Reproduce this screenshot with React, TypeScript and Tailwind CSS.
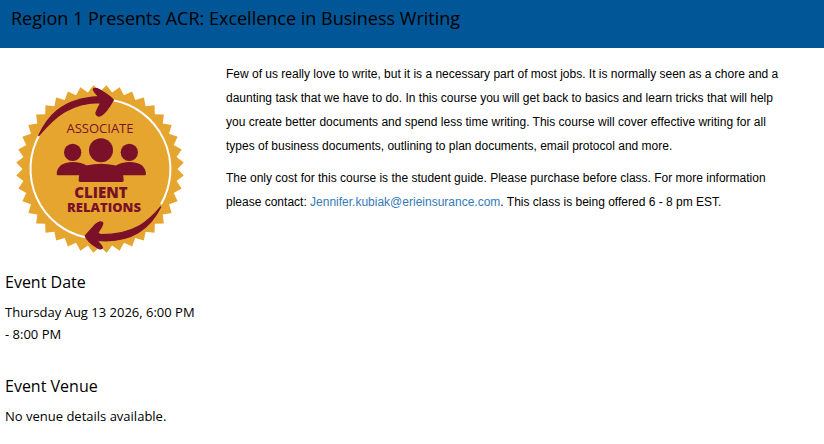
import React from 'react';

const TEETH = 40;

// Zigzag outline of the seal, tips and valleys alternating round the centre
const sealPoints = Array.from({ length: TEETH * 2 }, (_, i) => {
  const angle = ((i * 4.5 + 4.5) * Math.PI) / 180;
  const radius = i % 2 === 0 ? 84 : 77.5;
  return `${(84 + radius * Math.sin(angle)).toFixed(2)},${(84 - radius * Math.cos(angle)).toFixed(2)}`;
}).join(' ');

const AssociateBadge: React.FC = () => (
  <svg viewBox="0 0 168 168" className="w-[168px] h-[168px]" role="img" aria-label="Associate Client Relations">
    <polygon points={sealPoints} fill="#e5a52f" />
    {/* ring, open where the arrows run */}
    <path d="M97 15.3A70 70 0 0 1 145 119.2M69 152.3A70 70 0 0 1 23 50.6" fill="none" stroke="#fff" strokeWidth="2" />

    <g fill="#7b1128" stroke="#7b1128" strokeLinejoin="round">
      {/* arrows */}
      <g strokeWidth="4">
        <path transform="translate(14 -5) scale(.3333)" d="M26 167C50 116 90 56 206 50C203 46 190 34 190 28C194 21 207 28 216 34C230 43 242 50 250 60C240 78 226 100 212 107C204 110 198 105 198 99C201 88 208 79 212 68C120 68 75 110 26 167Z" />
        <path transform="translate(59 115) scale(.3333)" d="M257 21C225 60 180 104 78 104L68 100C72 90 85 76 83 69C78 62 66 69 59 76L31 107C35 118 50 133 66 142C74 147 82 149 82 142C80 134 69 128 66 121C160 130 222 92 257 21Z" />
      </g>
      {/* people */}
      <g transform="translate(34 30) scale(.3333)" stroke="none">
        <circle cx="68" cy="112" r="26" />
        <circle cx="238" cy="112" r="26" />
        <circle cx="153" cy="106" r="36" />
        <path d="M24 181Q20 181 20 176C22 156 34 147 48 144Q68 138 92 144Q104 147 112 153L112 181Z" />
        <path d="M284 181Q288 181 288 176C286 156 274 147 260 144Q240 138 216 144Q204 147 196 153L196 181Z" />
        <path d="M90 201Q86 201 86 196C87 170 94 156 112 151Q153 142 194 151C213 156 220 170 221 196Q221 201 217 201Z" />
      </g>
    </g>

    <g fill="#7b1128" stroke="none" textAnchor="middle">
      <text x="84" y="48" className="font-['Open_Sans',sans-serif] text-[13px]">ASSOCIATE</text>
      <text x="85" y="113" className="font-['Open_Sans',sans-serif] text-[15px] font-extrabold">CLIENT</text>
      <text x="88" y="127" className="font-['Open_Sans',sans-serif] text-[13px] font-extrabold">RELATIONS</text>
    </g>
  </svg>
);

interface EventSectionProps {
  title: string;
  children: React.ReactNode;
}

const EventSection: React.FC<EventSectionProps> = ({ title, children }) => (
  <section>
    <h2 className="text-base leading-6">{title}</h2>
    <p className="mt-[7px] text-[13px] leading-[22px]">{children}</p>
  </section>
);

export default function App() {
  return (
    <div className="bg-white font-['Open_Sans',sans-serif] text-black">
      <header className="bg-[#005696] px-[11px] pt-1 pb-4">
        <h1 className="text-lg leading-7">Region 1 Presents ACR: Excellence in Business Writing</h1>
      </header>

      <main className="flex">
        <aside className="w-[206px] shrink-0 pr-2 pl-[5px]">
          <div className="pl-[11px] pt-[37px]">
            <AssociateBadge />
          </div>
          <div className="mt-[17px] flex flex-col gap-[29px]">
            <EventSection title="Event Date">Thursday Aug 13 2026, 6:00 PM - 8:00 PM</EventSection>
            <EventSection title="Event Venue">No venue details available.</EventSection>
          </div>
        </aside>

        <div className="flex-1 space-y-2 pt-3.5 pr-10 pl-5 font-['Liberation_Sans',Arial,sans-serif] text-xs leading-6">
          <p>
            Few of us really love to write, but it is a necessary part of most jobs. It is normally seen as a chore and a
            daunting task that we have to do. In this course you will get back to basics and learn tricks that will help
            you create better documents and spend less time writing. This course will cover effective writing for all
            types of business documents, outlining to plan documents, email protocol and more.
          </p>
          <p>
            The only cost for this course is the student guide. Please purchase before class. For more information
            please contact:{' '}
            <a href="mailto:Jennifer.kubiak@erieinsurance.com" className="text-[#337ab7]">
              Jennifer.kubiak@erieinsurance.com
            </a>
            . This class is being offered 6 - 8 pm EST.
          </p>
        </div>
      </main>
    </div>
  );
}
